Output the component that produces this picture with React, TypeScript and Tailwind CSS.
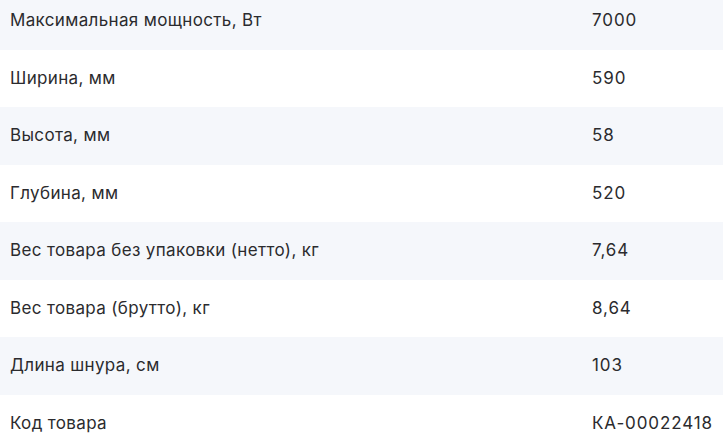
import React from 'react';

const specs = [
  { name: 'Максимальная мощность, Вт', value: '7000' },
  { name: 'Ширина, мм', value: '590' },
  { name: 'Высота, мм', value: '58' },
  { name: 'Глубина, мм', value: '520' },
  { name: 'Вес товара без упаковки (нетто), кг', value: '7,64' },
  { name: 'Вес товара (брутто), кг', value: '8,64' },
  { name: 'Длина шнура, см', value: '103' },
  { name: 'Код товара', value: 'КА-00022418' },
];

const App: React.FC = () => {
  return (
    <div className="w-[723px] h-[444px] overflow-hidden bg-white font-['Inter',sans-serif] text-[17px] text-[#2b2b2e]">
      <div className="-mt-[8px]">
        {specs.map((row, i) => (
          <div
            key={row.name}
            className={`flex items-center h-[57.5px] ${i % 2 === 0 ? 'bg-[#f5f7fb]' : 'bg-white'}`}
          >
            <div className="pl-[10px] w-[592px] tracking-[0.35px]">{row.name}</div>
            <div className="tracking-[0.9px]">{row.value}</div>
          </div>
        ))}
      </div>
    </div>
  );
};

export default App;
